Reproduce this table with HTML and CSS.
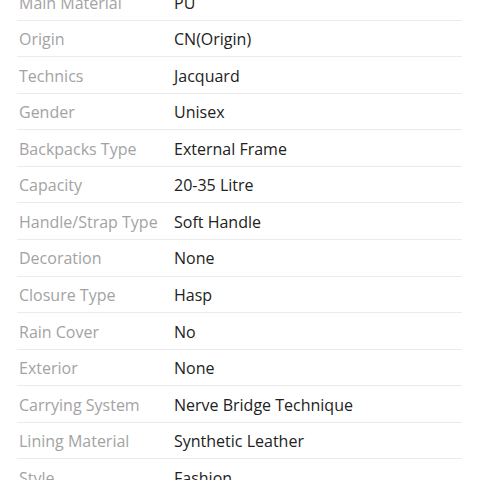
FILE: index.html
```html
<!DOCTYPE html>
<html>
<head>
<meta charset="utf-8">
<link rel="stylesheet" href="styles.css">
</head>
<body>
<div class="specs">
  <div class="row"><div class="label">Main Material</div><div class="value">PU</div></div>
  <div class="row"><div class="label">Origin</div><div class="value">CN(Origin)</div></div>
  <div class="row"><div class="label">Technics</div><div class="value">Jacquard</div></div>
  <div class="row"><div class="label">Gender</div><div class="value">Unisex</div></div>
  <div class="row"><div class="label">Backpacks Type</div><div class="value">External Frame</div></div>
  <div class="row"><div class="label">Capacity</div><div class="value">20-35 Litre</div></div>
  <div class="row"><div class="label">Handle/Strap Type</div><div class="value">Soft Handle</div></div>
  <div class="row"><div class="label">Decoration</div><div class="value">None</div></div>
  <div class="row"><div class="label">Closure Type</div><div class="value">Hasp</div></div>
  <div class="row"><div class="label">Rain Cover</div><div class="value">No</div></div>
  <div class="row"><div class="label">Exterior</div><div class="value">None</div></div>
  <div class="row"><div class="label">Carrying System</div><div class="value">Nerve Bridge Technique</div></div>
  <div class="row"><div class="label">Lining Material</div><div class="value">Synthetic Leather</div></div>
  <div class="row"><div class="label">Style</div><div class="value">Fashion</div></div>
</div>
</body>
</html>
```

FILE: styles.css
```css
html, body {
  margin: 0;
  padding: 0;
  background: #fff;
  overflow: hidden;
}
body {
  font-family: "Open Sans", "Liberation Sans", sans-serif;
  font-size: 16px;
}
.specs {
  margin: -15.8px 18px 0 17px;
}
.row {
  display: flex;
  border-bottom: 1px solid #ebebeb;
  padding: 7.4px 0 5.75px;
  line-height: 22.4px;
}
.label {
  width: 155px;
  padding-left: 2px;
  flex: none;
  color: #a3a3a3;
}
.value {
  color: #222;
}
```
